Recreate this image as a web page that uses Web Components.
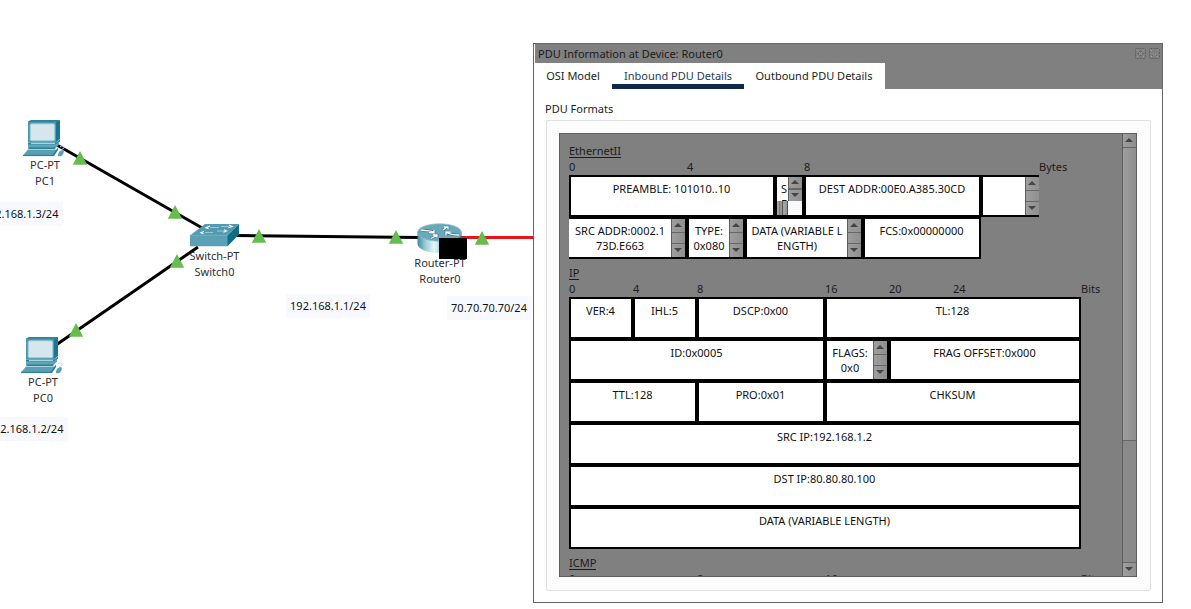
<!DOCTYPE html>
<html lang="en">
<head>
<meta charset="utf-8">
<title>PDU Information</title>
<style>
html,body{margin:0;height:100%;overflow:hidden;background:#fff}
body{font:11px/15px "Noto Sans",sans-serif;color:#1c1c1c}
</style>
</head>
<body>
<sim-workspace></sim-workspace>
<script>
const define = (name, html, setup) => {
  const t = document.createElement('template');
  t.innerHTML = html;
  customElements.define(name, class extends HTMLElement {
    constructor() {
      super();
      this.attachShadow({mode: 'open'}).append(t.content.cloneNode(true));
    }
    connectedCallback() { if (setup) setup(this); }
  });
};
const place = el => {
  el.style.left = el.getAttribute('x') + 'px';
  el.style.top = el.getAttribute('y') + 'px';
};

define('pc-icon', `<style>:host{display:block;width:42px;height:38px;margin-left:-2px}svg{display:block}</style>
<svg width="42" height="38" viewBox="0 0 42 38">
<path d="M5 2.500 8 1h29l-4 3H5z" fill="#2f8299"/><path d="M32 4l5-3v19l-5 4z" fill="#167791"/>
<path d="M5 2.800h28V23.500H5z" fill="#4b98ad"/><rect x="7.200" y="4.800" width="24.500" height="17" rx="1.500" fill="#d5e6ec" stroke="#9cc8d6" stroke-width=".8"/>
<path d="M5 23.500h28l4-3v2l-4 3.500H5z" fill="#2f849b"/><path d="M8 24.300h24v.8H8z" fill="#e2f1f5"/>
<path d="M5 25.500h28l3-3v3l-4 4.500H5z" fill="#60a6b9"/><path d="M6 28.500h26v1.200H6z" fill="#197890"/>
<path d="M5 30.500h30l-5 6H0z" fill="#5b9fb2"/><path d="M35 28.500v2.500l-4 6h-2z" fill="#237e96"/><path d="M0 35.800h30v1.300H0z" fill="#347f95"/>
<path d="M35 36c0-2 2-5 5-5 2 1 0 5-2 6.300h-3z" fill="#5c9fb3"/><path d="M37 28c2-2 5-1 4 1l-3 2" fill="none" stroke="#bbdbe4"/>
</svg>`);

define('switch-icon', `<style>:host{display:block;width:50px;height:25px}svg{display:block}</style>
<svg width="50" height="25" viewBox="0 0 50 25">
<path d="M0 12.500 15 1h34L37 12.500z" fill="#539bb0"/><path d="M0 12h38v11.300H0z" fill="#5ba1b5"/><path d="M37.500 12.300 49 1v10.500L37.500 23.300z" fill="#0f6d86"/>
<path d="M0 12.300h37.500" stroke="#74b1c3" fill="none"/>
<g stroke="#a9d0dc" stroke-width=".8" fill="none"><path d="M20 4.500h9M31 3.500h8M15 9.500h8M27 8h8"/></g>
<g stroke="#fff" stroke-width="1.100" fill="none"><path d="M20 3l-4 1.700 2.500 1M39 2l3 1.400-3.500 1.300M14 8.300l-3 1.400 2.500 1M34 6.800l2.500 1.200-3 1.200"/></g>
</svg>`);

define('router-icon', `<style>:host{display:block;width:46px;height:32px}svg{display:block}</style>
<svg width="46" height="32" viewBox="0 0 46 32">
<defs><linearGradient id="g"><stop offset="0" stop-color="#3f8da5"/><stop offset=".18" stop-color="#9ccbd9"/><stop offset=".38" stop-color="#e7f5f9"/><stop offset=".6" stop-color="#8abdce"/><stop offset="1" stop-color="#2c7d96"/></linearGradient></defs>
<path d="M.5 10v11c0 5 10 9 22 9s22-4 22-9V10z" fill="url(#g)"/>
<ellipse cx="22.500" cy="9.500" rx="22" ry="8.700" fill="#6ba8ba" stroke="#8fc0cf" stroke-width=".8"/>
<g fill="none" stroke="#2f7084" stroke-width="2.600"><path d="M4 7c5 1 8 0 13 2m0-2v3l-5-.3M26 7l4-3m-3 0h4v2M14 15.500l6-3.500m-4 0h4v2M42 12c-5 0-8 0-13-2.500m0 3V9l5 .2"/></g>
<g fill="none" stroke="#fff" stroke-width="1.300"><path d="M4 7c5 1 8 0 13 2m0-2v3l-5-.3M26 7l4-3m-3 0h4v2M14 15.500l6-3.500m-4 0h4v2M42 12c-5 0-8 0-13-2.500m0 3V9l5 .2"/></g>
</svg>`);

define('link-layer', `<style>:host{position:absolute;inset:0}svg{display:block}</style>
<svg width="534" height="609" viewBox="0 0 534 609"><g stroke="#000" stroke-width="3">
<path d="M57 145 204 229M198 247 56 345M236 235.500 420 237.500"/><path d="M460 237.500H534" stroke="#e8141c"/></g></svg>`);

define('link-lights', `<style>:host{position:absolute;inset:0}svg{display:block}</style>
<svg width="534" height="609" viewBox="0 0 534 609"><g fill="#65bd4e">
<path d="M80 151l7.200 13.700H72.800zM175 205l7.200 13.700h-14.400zM177 254l7.200 13.700h-14.400zM76 323l7.200 13.700H68.800zM259 229l7.200 13.700h-14.400zM396 230l7.200 13.700h-14.400zM482 231l7.200 13.700h-14.400z"/></g></svg>`);

define('net-device', `<style>:host{position:absolute;display:flex;flex-direction:column;align-items:center;width:80px;text-align:center;line-height:16px;color:#2e2e2e}
.i{height:var(--icon-h)}</style><div class="i"><slot name="icon"></slot></div><slot></slot>`, place);

define('ip-note', `<style>:host{position:absolute;box-sizing:border-box;width:84px;height:24px;padding:4px 0;background:#f8f9fe;text-align:center;line-height:16px;white-space:nowrap;color:#111}</style><slot></slot>`, place);

define('scroll-bar', `<style>
:host{display:flex;flex-direction:column;box-sizing:border-box;width:14px;flex:none;background:#8a8a8a;border-left:1px solid #5e5e5e}
.b,.t{box-sizing:border-box;background:linear-gradient(90deg,#9e9e9e,#8f8f8f)}
.b{height:var(--btn,14px);flex:none;display:flex;align-items:center;padding:0 0 1px 2px}
.u{border-bottom:1px solid #666}.d{border-top:1px solid #666;margin-top:auto}
.t{height:var(--thumb,auto);flex:var(--thumb-flex,1);border-bottom:var(--thumb-line,0) solid #666}
svg{display:block}
</style><div class="b u"><svg width="8" height="4"><path d="M4 0l4 4H0z" fill="#444"/></svg></div><div class="t"></div><div class="b d"><svg width="8" height="4"><path d="M0 0h8L4 4z" fill="#444"/></svg></div>`);

define('pdu-cell', `<style>
:host{display:flex;box-sizing:border-box;height:42px;border:2px solid #000;background:#fff;color:#111;overflow:hidden}
:host([open-left]){border-left:0}:host([open-right]){border-right:0}
.x{flex:1;min-width:0;padding:4px 1px 0 0;text-align:center;white-space:nowrap;overflow:hidden}
scroll-bar{display:none}
:host([scroll]) .x{padding-right:0}
:host([scroll]) scroll-bar{display:flex}
</style><div class="x"><slot></slot></div><scroll-bar></scroll-bar>`, el => { el.style.width = el.getAttribute('w') + 'px'; });

define('narrow-cell', `<style>
:host{display:grid;grid-template:24px 14px / 11px 14px;box-sizing:border-box;width:29px;height:42px;border:2px solid #000;background:#fff;color:#111}
.x{padding-top:4px;padding-left:4px;overflow:hidden}
scroll-bar{--btn:12px;--thumb-flex:0}
.h{display:flex;background:#999}.h i{flex:1;border-right:1px solid #555;background:linear-gradient(90deg,#a4a4a4 40%,#777 40% 60%,#999 60%)}
.c{background:#fafafa}
</style><div class="x"><slot></slot></div><scroll-bar></scroll-bar><div class="h"><i></i><i></i></div><div class="c"></div>`);

define('pdu-row', `<style>:host{display:flex}</style><slot></slot>`);

define('pdu-scale', `<style>:host{display:grid;height:16px;line-height:16px;white-space:nowrap}</style><slot></slot>`,
  el => { el.style.gridTemplateColumns = el.getAttribute('cols').split(' ').map(n => n + 'px').join(' '); });

define('pdu-section', `<style>:host{display:block;margin-bottom:6px}
h3{margin:0 0 1px;width:max-content;height:14px;font:inherit;line-height:16px;border-bottom:1px solid #1c1c1c}</style>
<h3><slot name="title"></slot></h3><slot></slot>`);

define('pdu-view', `<style>
:host{display:flex;box-sizing:border-box;height:444px;border:1px solid #5f5f5f;background:#808080;overflow:hidden}
.c{flex:1;min-width:0;padding:9px 0 0 9px;overflow:hidden}
scroll-bar{--btn:14px;--thumb:293px;--thumb-flex:none;--thumb-line:1px}
</style><div class="c"><slot></slot></div><scroll-bar></scroll-bar>`);

define('pdu-tab', `<style>:host{display:block;box-sizing:border-box;height:26px;padding:5px 1px 0 0;background:#fff;text-align:center;line-height:16px;border-bottom:5px solid #fff}
:host([active]){padding-right:0;color:#1f3a60;border-color:#0e2a4a}</style><slot></slot>`,
  el => { el.style.width = el.getAttribute('w') + 'px'; });

define('pdu-window', `<style>
:host{position:absolute;left:533px;top:43px;box-sizing:border-box;width:630px;height:560px;border:1px solid #666;background:#fff}
header{display:flex;justify-content:space-between;height:19px;margin-left:1px;background:#808080;padding:0 1px 0 3px;line-height:20px}
header svg{margin-top:4px}
nav{display:flex;height:26px;margin-left:1px;background:#808080}
.l{padding:12px 0 0 11px;line-height:16px;height:19px}
.g{box-sizing:border-box;width:605px;height:471px;margin-left:12px;padding:12px 13px 12px 12px;border:1px solid #e0e0e0;border-radius:2px;background:#fcfcfc}
</style>
<header><span><slot name="title"></slot></span>
<svg width="26" height="12" viewBox="0 0 26 12" fill="none"><g stroke="#626262" stroke-dasharray="2 1"><rect x=".5" y=".5" width="10" height="10" rx="1"/><rect x="14.500" y=".5" width="10" height="10" rx="1"/></g><g stroke="#5c5c5c"><path d="M3 5.500 5.500 3 8 5.500 5.500 8zM17 3l5 5m0-5-5 5"/></g><g stroke="#a4a4a4" stroke-dasharray="1.500 1.500"><path d="M1.500 1.500l8 8M9.500 1.500l-8 8M15.500 1.500l8 8M23.500 1.500l-8 8"/></g></svg></header>
<nav><slot name="tab"></slot></nav>
<div class="l">PDU Formats</div>
<div class="g"><slot></slot></div>`);

define('sim-workspace', `<style>
:host{display:block;position:relative;width:1191px;height:609px;overflow:hidden;background:#fff}
.mask{position:absolute;left:439px;top:238px;width:28px;height:21px;background:#000}
</style>
<link-layer></link-layer>
<net-device x="5" y="119" style="--icon-h:38px"><pc-icon slot="icon"></pc-icon><span>PC-PT</span><span>PC1</span></net-device>
<net-device x="3" y="336" style="--icon-h:38px"><pc-icon slot="icon"></pc-icon><span>PC-PT</span><span>PC0</span></net-device>
<net-device x="174.500" y="223" style="--icon-h:25px"><switch-icon slot="icon"></switch-icon><span>Switch-PT</span><span>Switch0</span></net-device>
<net-device x="400" y="223" style="--icon-h:32px"><router-icon slot="icon"></router-icon><span>Router-PT</span><span>Router0</span></net-device>
<link-lights></link-lights>
<div class="mask"></div>
<ip-note x="-21.500" y="202">192.168.1.3/24</ip-note>
<ip-note x="-16.500" y="417">192.168.1.2/24</ip-note>
<ip-note x="286" y="294">192.168.1.1/24</ip-note>
<ip-note x="447" y="296">70.70.70.70/24</ip-note>
<pdu-window>
<span slot="title">PDU Information at Device: Router0</span>
<pdu-tab slot="tab" w="77">OSI Model</pdu-tab><pdu-tab slot="tab" w="132" active>Inbound PDU Details</pdu-tab><pdu-tab slot="tab" w="141">Outbound PDU Details</pdu-tab>
<pdu-view>
<pdu-section><span slot="title">EthernetII</span>
<pdu-scale cols="118 117 235 60"><span>0</span><span>4</span><span>8</span><span>Bytes</span></pdu-scale>
<pdu-row><pdu-cell w="206">PREAMBLE: 101010..10</pdu-cell><narrow-cell>S<br>F</narrow-cell><pdu-cell w="177">DEST ADDR:00E0.A385.30CD</pdu-cell><pdu-cell w="58" scroll open-right></pdu-cell></pdu-row>
<pdu-row><pdu-cell w="118" scroll open-left>SRC ADDR:0002.1<br>73D.E663</pdu-cell><pdu-cell w="58" scroll>TYPE:<br>0x080</pdu-cell><pdu-cell w="118" scroll>DATA (VARIABLE L<br>ENGTH)</pdu-cell><pdu-cell w="118">FCS:0x00000000</pdu-cell></pdu-row>
</pdu-section>
<pdu-section><span slot="title">IP</span>
<pdu-scale cols="64 64 128 64 64 128 40"><span>0</span><span>4</span><span>8</span><span>16</span><span>20</span><span>24</span><span>Bits</span></pdu-scale>
<pdu-row><pdu-cell w="64">VER:4</pdu-cell><pdu-cell w="64">IHL:5</pdu-cell><pdu-cell w="128">DSCP:0x00</pdu-cell><pdu-cell w="256">TL:128</pdu-cell></pdu-row>
<pdu-row><pdu-cell w="256">ID:0x0005</pdu-cell><pdu-cell w="64" scroll>FLAGS:<br>0x0</pdu-cell><pdu-cell w="192">FRAG OFFSET:0x000</pdu-cell></pdu-row>
<pdu-row><pdu-cell w="128">TTL:128</pdu-cell><pdu-cell w="128">PRO:0x01</pdu-cell><pdu-cell w="256">CHKSUM</pdu-cell></pdu-row>
<pdu-row><pdu-cell w="512">SRC IP:192.168.1.2</pdu-cell></pdu-row>
<pdu-row><pdu-cell w="512">DST IP:80.80.80.100</pdu-cell></pdu-row>
<pdu-row><pdu-cell w="512">DATA (VARIABLE LENGTH)</pdu-cell></pdu-row>
</pdu-section>
<pdu-section><span slot="title">ICMP</span>
<pdu-scale cols="128 128 256 40"><span>0</span><span>8</span><span>16</span><span>Bits</span></pdu-scale>
</pdu-section>
</pdu-view>
</pdu-window>`);
</script>
</body>
</html>
